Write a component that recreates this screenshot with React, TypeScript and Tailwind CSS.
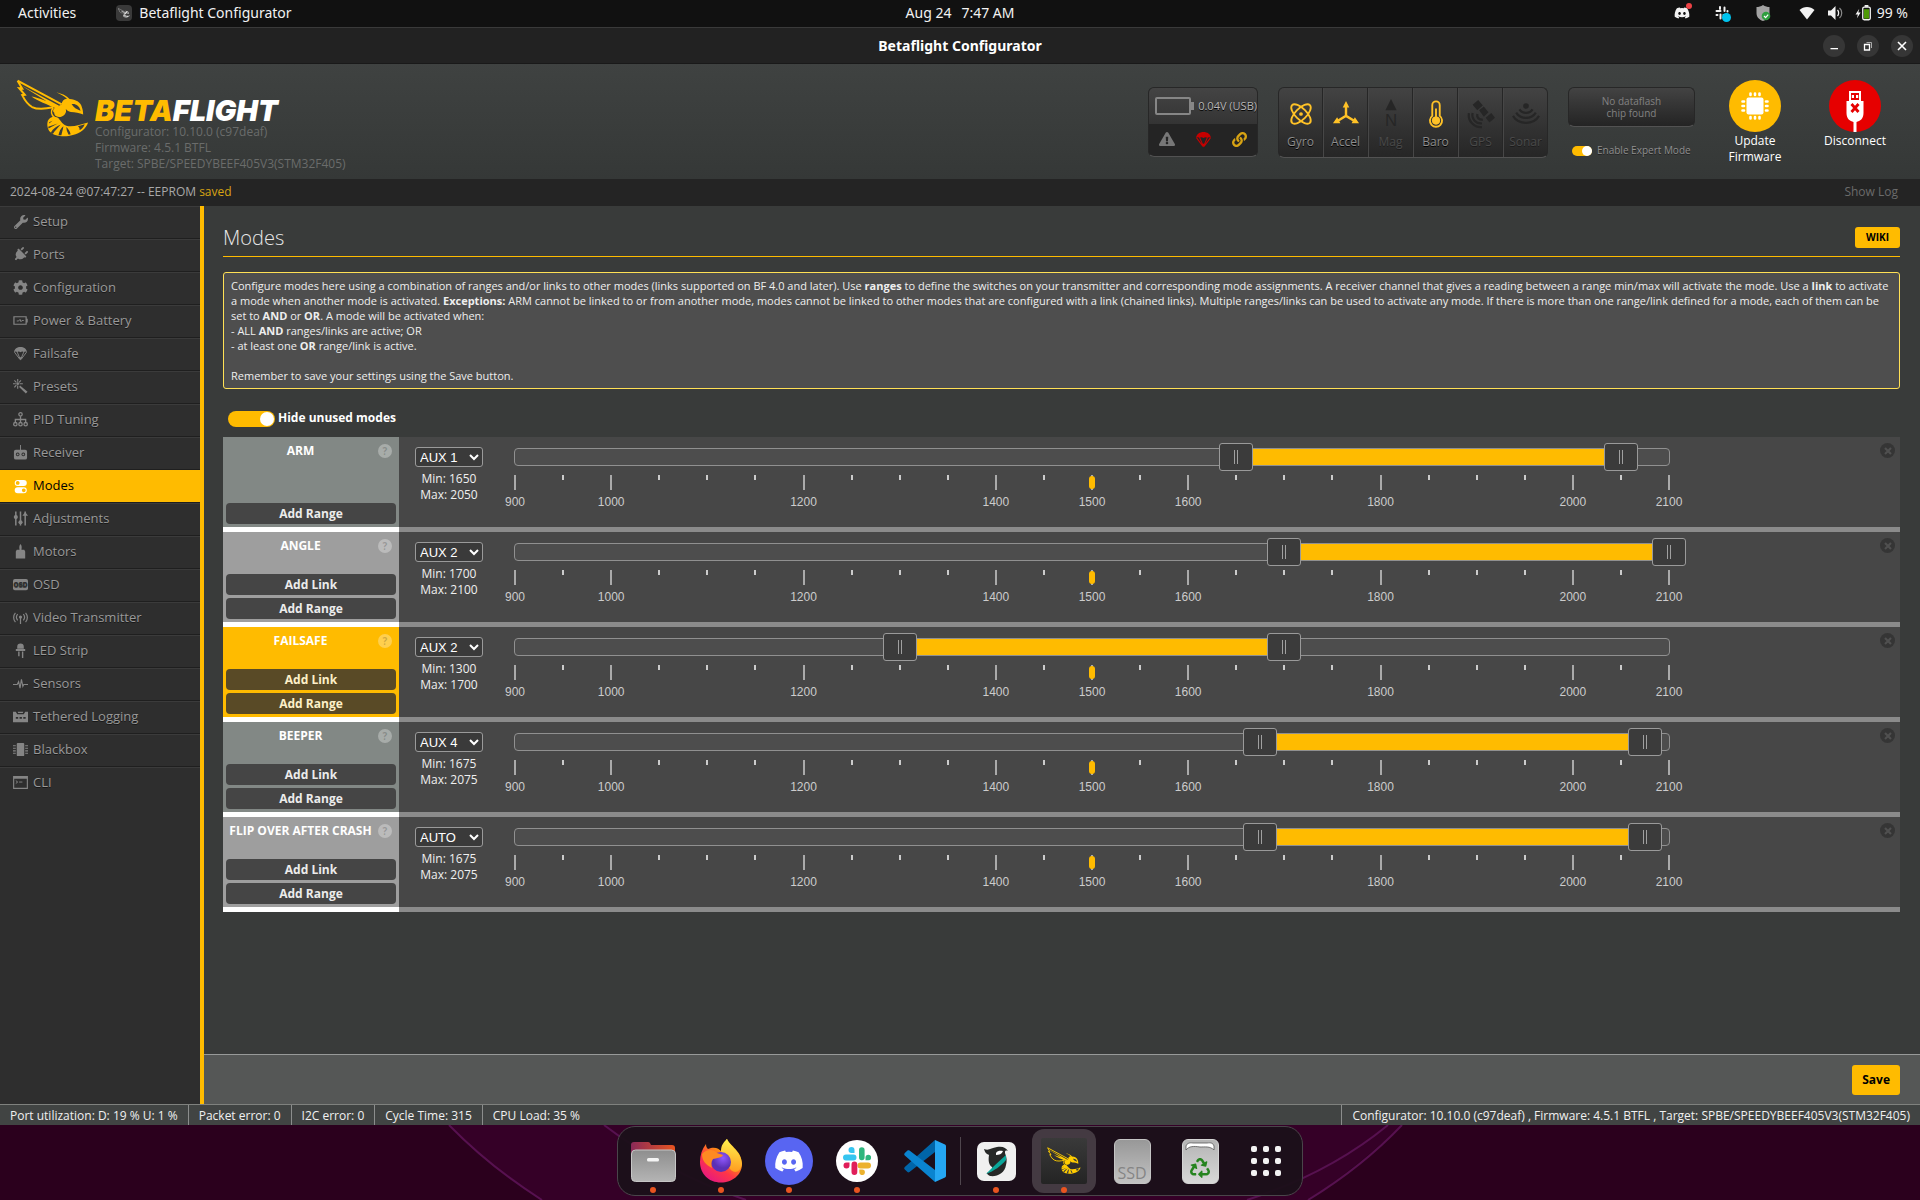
import { useState } from "react";
import type { ReactNode } from "react";
import { FaWrench, FaPlug, FaCog, FaDiscord, FaRecycle, FaLink, FaExclamationTriangle } from "react-icons/fa";

/* ---------- drawings ---------- */

function Bee({ className }: { className?: string }) {
  return (
    <svg viewBox="46 235 220 176" className={className} aria-hidden="true">
      <path
        d="M50 240 L64 264 L55 263 L72 283 L64 284 C72 300 80 312 94 320 C112 329 134 326 158 321 M50 240 L184 312"
        fill="none"
        stroke="currentColor"
        strokeWidth="6"
        strokeLinejoin="miter"
      />
      <path d="M64 256 L176 316 L170 322 L60 254 Z M92 288 C115 292 145 304 172 318 L166 324 C140 312 112 302 92 288 Z" fill="currentColor" />
      <path d="M168 275 C184 279 199 285 208 296 C226 297 242 306 245 320 C248 328 249 335 249 343 C238 337 224 336 212 335 C204 333 199 330 196 325 C200 336 193 347 180 350 C168 352 161 346 161 337 C154 332 160 322 168 320 L184 312 C184 302 190 296 200 295 C191 286 180 281 168 275 Z" fill="currentColor" />
      <path d="M158 322 C150 332 152 344 162 352" fill="none" stroke="currentColor" strokeWidth="5" />
      <path d="M142 362 C148 350 160 347 171 352 C180 358 184 372 198 377 C218 383 240 372 264 367 C258 386 240 400 218 405 C198 411 164 411 149 396 C141 388 138 374 142 362 Z" fill="currentColor" />
      <g className="fill-[#3a3d3c]">
        <path d="M214 311 C226 309 238 316 241 331 C230 327 219 322 214 311 Z" />
        <path d="M143 380 L172 370 L144 385 Z M151 397 C158 386 168 378 181 373 C173 382 163 392 157 402 Z M174 406 C176 394 181 384 189 378 C188 388 184 398 183 406 Z M205 404 C200 396 198 388 198 381 C204 386 209 394 211 403 Z M233 378 L254 372 C250 382 243 388 238 390 C239 385 237 381 233 378 Z M146 366 L156 362 L146 370 Z" />
      </g>
    </svg>
  );
}

const S = ({ children, className = "size-[15px]", box = "0 0 16 16" }: { children: ReactNode; className?: string; box?: string }) => (
  <svg viewBox={box} className={className} fill="currentColor" aria-hidden="true">
    {children}
  </svg>
);

function Parachute({ className }: { className?: string }) {
  return (
    <S className={className}>
      <path d="M1 6.500 C1.500 3 4.500 1 8 1 C11.500 1 14.500 3 15 6.500 C13.900 5.700 12.500 5.700 11.600 6.600 C10.700 5.700 9.200 5.700 8 6.600 C6.800 5.700 5.300 5.700 4.400 6.600 C3.500 5.700 2.100 5.700 1 6.500 Z" />
      <path d="M1.500 6.500 L7.500 14.500 M4.500 6.500 L7.700 14 M14.500 6.500 L8.500 14.500 M11.500 6.500 L8.300 14" fill="none" stroke="currentColor" strokeWidth="1" />
      <path d="M6.500 12 H9.500 L8 15.500 Z" />
    </S>
  );
}

function SlackMark({ className }: { className?: string }) {
  return (
    <svg viewBox="0 0 28 28" className={className} aria-hidden="true">
      <path fill="#36c5f0" d="M8.500 0 a3 3 0 0 1 3 3 V6 H8.500 a3 3 0 0 1 0-6 Z M3 7.500 h7.500 a3 3 0 0 1 0 6 H3 a3 3 0 0 1 0-6 Z" />
      <path fill="#2eb67d" d="M16 3 a2.800 2.800 0 0 1 5.600 0 V10.500 a2.800 2.800 0 0 1-5.600 0 Z M22.500 13.300 V10.300 a2.800 2.800 0 1 1 2.800 3 Z" />
      <path fill="#ecb22e" d="M17.500 15.500 H25 a3 3 0 0 1 0 6 H17.500 a3 3 0 0 1 0-6 Z M16.300 22.500 h3 a2.800 2.800 0 1 1-3 2.800 Z" />
      <path fill="#e01e5a" d="M8.500 17.500 a2.900 2.900 0 0 1 5.800 0 V25 a2.900 2.900 0 0 1-5.800 0 Z M6.500 15.500 v3 a3 3 0 1 1-3-3 Z" />
    </svg>
  );
}

/* ---------- desktop top bar ---------- */

function TopBar() {
  return (
    <header className="grid h-[27px] grid-cols-3 items-center bg-[#111111] pb-px font-['Noto_Sans','Open_Sans',sans-serif] text-sm text-[#f2f2f2]">
      <div className="flex items-center pl-[18px]">
        <button type="button">Activities</button>
        <span className="ml-10 grid size-4 place-items-center rounded-sm bg-[#3a3a3a]">
          <Bee className="w-3 text-[#d8d8d8]" />
        </span>
        <span className="ml-[7px]">Betaflight Configurator</span>
      </div>
      <div className="flex justify-center gap-2.5">
        <span>Aug 24</span>
        <span>7:47 AM</span>
      </div>
      <div className="flex items-center justify-end pr-3">
        <span className="relative">
          <FaDiscord className="size-4" />
          <i className="absolute -top-0.5 -right-0.5 size-1.5 rounded-full bg-[#ed4245]" />
        </span>
        <span className="relative ml-[25px]">
          <svg viewBox="0 0 28 28" className="size-[14px]" fill="none" stroke="currentColor" strokeWidth="4" strokeLinecap="round">
            <path d="M10 2 V6 M3 10 H11 M19 3 V10 M25 10 V11 M17 18 H25 M11 17 V25 M3 18 H5" />
          </svg>
          <i className="absolute -right-0.5 -bottom-0.5 size-[9px] rounded-full bg-[#00c3ee]" />
        </span>
        <span className="relative ml-[26px]">
          <S className="size-4">
            <path d="M8 0 C10 1.600 12.500 2 14.500 2 V8 C14.500 12 12 14.500 8 16 C4 14.500 1.500 12 1.500 8 V2 C3.500 2 6 1.600 8 0 Z" className="fill-[#a3a3a3]" />
            <circle cx="11" cy="11" r="4.300" className="fill-[#2f9e3f]" />
            <path d="M9 11 L10.600 12.600 L13.200 9.600" fill="none" stroke="#fff" strokeWidth="1.200" />
          </S>
        </span>
        <S className="ml-7 size-4">
          <path d="M0.500 5 C4.500 1 11.500 1 15.500 5 L8 14.500 Z" />
        </S>
        <S className="ml-3 size-4">
          <path d="M1 5.500 H4 L8.500 1 V15 L4 10.500 H1 Z" />
          <path d="M10.500 5 C12 6.500 12 9.500 10.500 11" fill="none" stroke="currentColor" strokeWidth="1.300" />
          <path d="M12.500 3 C15.500 5.500 15.500 10.500 12.500 13" fill="none" stroke="#8a8a8a" strokeWidth="1.200" />
        </S>
        <S className="ml-3 h-4 w-[17px]" box="0 0 17 17">
          <path d="M4 4 L0 10 H2.500 L1.500 14 L5.500 8 H3 Z" />
          <rect x="7.700" y="2.200" width="8" height="13.500" rx="1.500" fill="none" stroke="currentColor" strokeWidth="1.400" />
          <rect x="9.700" y="0" width="4" height="2" />
          <rect x="9" y="4.500" width="5.400" height="10" className="fill-[#4e9a06]" />
        </S>
        <span className="ml-[5px]">99 %</span>
      </div>
    </header>
  );
}

function TitleBar() {
  const button = "grid size-[22px] place-items-center rounded-full bg-[#363636]";
  return (
    <div className="grid h-[37px] grid-cols-[1fr_auto_1fr] items-center border-t border-b border-t-[#3a3a3a] border-b-[#191919] bg-[#222222] px-[7px] font-['Noto_Sans','Open_Sans',sans-serif] text-sm text-white">
      <h1 className="col-start-2 font-bold">Betaflight Configurator</h1>
      <div className="flex justify-end gap-3">
        <button type="button" aria-label="Minimize" className={button}>
          <S className="size-3" box="0 0 12 12"><path d="M2.500 8 H10 V9.300 H2.500 Z" /></S>
        </button>
        <button type="button" aria-label="Restore" className={button}>
          <S className="size-3" box="0 0 12 12">
            <path d="M2.500 4.500 H7.500 V10 H2.500 Z" fill="none" stroke="currentColor" strokeWidth="1.300" />
            <path d="M4.500 2.500 H9.500 V8" fill="none" stroke="#aaa" strokeWidth="1" />
          </S>
        </button>
        <button type="button" aria-label="Close" className={button}>
          <S className="size-3" box="0 0 12 12"><path d="M2 2 L10 10 M10 2 L2 10" stroke="currentColor" strokeWidth="1.600" /></S>
        </button>
      </div>
    </div>
  );
}

/* ---------- application header ---------- */

const sensors: { label: string; on: boolean; icon: ReactNode }[] = [
  {
    label: "Gyro",
    on: true,
    icon: (
      <g fill="none" stroke="currentColor" strokeWidth="2">
        <ellipse cx="15" cy="15" rx="13.500" ry="6" transform="rotate(45 15 15)" />
        <ellipse cx="15" cy="15" rx="13.500" ry="6" transform="rotate(-45 15 15)" />
        <circle cx="15" cy="15" r="2" fill="currentColor" stroke="none" />
      </g>
    ),
  },
  {
    label: "Accel",
    on: true,
    icon: (
      <g>
        <path d="M15 5 V17 L5 23 M15 17 L25 23" fill="none" stroke="currentColor" strokeWidth="2.600" />
        <path d="M15 1 L18.500 8 H11.500 Z M1 25 L5.500 18.500 L9 25 Z M29 25 L24.500 18.500 L21 25 Z" />
      </g>
    ),
  },
  {
    label: "Mag",
    on: false,
    icon: (
      <g>
        <path fillRule="evenodd" d="M15 -1 L21 11 H9 Z" />
        <text x="15" y="28" textAnchor="middle" className="font-['Liberation_Sans',sans-serif] text-[18px]">N</text>
      </g>
    ),
  },
  {
    label: "Baro",
    on: true,
    icon: (
      <g>
        <path d="M11 17 V5.500 a4 4 0 0 1 8 0 V17 a6.500 6.500 0 1 1-8 0 Z" fill="none" stroke="currentColor" strokeWidth="2" />
        <circle cx="15" cy="22" r="4.400" />
        <path d="M14 9 H16 V20 H14 Z" />
      </g>
    ),
  },
  {
    label: "GPS",
    on: false,
    icon: (
      <g>
        <path d="M6 5 L12 0 L17 6 L11 11 Z M20 19 L26 14 L30 19 L24 24 Z M13 11 L18 7 L23 13 L18 18 Z" />
        <path d="M11 15 a5 5 0 0 0 6 6 M6 14 a9 9 0 0 0 10 11 M2 14 a13 13 0 0 0 14 15" fill="none" stroke="currentColor" strokeWidth="2.400" />
      </g>
    ),
  },
  {
    label: "Sonar",
    on: false,
    icon: (
      <g>
        <circle cx="15" cy="6.500" r="3" />
        <path d="M8 10 C11 15 19 15 22 10 M4.500 13.500 C9 21 21 21 25.500 13.500 M1 17 C7 27 23 27 29 17" fill="none" stroke="currentColor" strokeWidth="2.300" />
      </g>
    ),
  },
];

function AppHeader() {
  const [expert, setExpert] = useState(true);
  return (
    <div className="flex h-[115px] justify-between bg-linear-to-b from-[#3f4241] to-[#353837]">
      <div className="flex pt-[15px] pl-4">
        <Bee className="h-[58px] w-[73px] text-[#ffbb00]" />
        <div className="pt-[17px] pl-1.5">
          <div className="mb-px h-[27px] font-['Inter','Liberation_Sans',sans-serif] text-[29px] leading-[29px] font-black italic text-white">
            <span className="text-[#ffbb00]">BETA</span>FLIGHT
          </div>
          <div className="text-xs leading-4 text-[#6a6c6b]">
            <p>Configurator: 10.10.0 (c97deaf)</p>
            <p>Firmware: 4.5.1 BTFL</p>
            <p>Target: SPBE/SPEEDYBEEF405V3(STM32F405)</p>
          </div>
        </div>
      </div>
      <div className="flex pr-8">
        <div className="mt-[23px] h-[70px] w-[110px] overflow-hidden rounded-md border border-[#272727] border-b-[#525252] bg-[#242424]">
          <div className="flex h-9 items-center bg-linear-to-b from-[#444444] to-[#343434] pl-1.5">
            <span className="h-[18px] w-[37px] rounded-xs border-2 border-[#868686]" />
            <span className="h-2 w-[3px] bg-[#868686]" />
            <span className="ml-1 text-[11px] whitespace-nowrap text-[#b8b8b8] [text-shadow:0_1px_#000]">0.04V (USB)</span>
          </div>
          <div className="flex h-[30px] items-center justify-between pr-2.5 pl-2.5">
            <FaExclamationTriangle className="size-4 text-[#777777]" aria-label="Warning" />
            <Parachute className="size-[17px] text-[#c70000]" />
            <FaLink className="size-[15px] text-[#d8a313]" aria-label="Link" />
          </div>
        </div>
        <ul className="mt-[23px] ml-5 flex h-[71px] w-[270px] overflow-hidden rounded-md border border-[#272727] border-b-[#525252] bg-linear-to-b from-[#434343] to-[#262626]">
          {sensors.map((s) => (
            <li key={s.label} className="flex flex-1 flex-col items-center border-r border-l border-r-[#262626] border-l-[#474747] pt-[12px] first:border-l-0 last:border-r-0">
              <svg viewBox="0 0 30 30" className={s.on ? "size-7 overflow-visible text-[#ffc227]" : "size-7 overflow-visible text-[#262626]"} fill="currentColor" aria-hidden="true">
                {s.icon}
              </svg>
              <span className={s.on ? "mt-1 text-xs leading-5 text-[#8d8d8d] [text-shadow:0_1px_#000]" : "mt-1 text-xs leading-5 text-[#4a4a4a] [text-shadow:0_1px_#1c1c1c]"}>
                {s.label}
              </span>
            </li>
          ))}
        </ul>
        <div className="mt-[23px] ml-5 w-[127px]">
          <div className="grid h-10 place-items-center rounded-md border border-[#272727] border-b-[#525252] bg-linear-to-b from-[#434343] to-[#242424] text-center text-[10px] leading-3 text-[#828282]">
            <span className="w-16">No dataflash chip found</span>
          </div>
          <label className="mt-4 flex items-center gap-[5px] pl-1 text-[10px] whitespace-nowrap text-[#8f8f8f] [text-shadow:0_1px_#222]">
            <input
              type="checkbox"
              role="switch"
              checked={expert}
              onChange={(e) => setExpert(e.target.checked)}
              className="relative h-[10px] w-5 shrink-0 appearance-none rounded-full bg-[#777] after:absolute after:top-0 after:left-0 after:size-[10px] after:rounded-full after:bg-white checked:bg-[#ffbb00] checked:after:right-0 checked:after:left-auto"
            />
            Enable Expert Mode
          </label>
        </div>
        <button type="button" className="mt-4 ml-[27px] flex w-[66px] flex-col items-center text-xs leading-4 text-white">
          <span className="mb-px grid size-[52px] shrink-0 place-items-center rounded-full bg-[#ffbb00]">
            <S className="size-7" box="0 0 28 28">
              <rect x="5.500" y="5.500" width="17" height="17" rx="2" />
              <path d="M9.500 1.500 V3 M14 1.500 V3 M18.500 1.500 V3 M9.500 25 V26.500 M14 25 V26.500 M18.500 25 V26.500 M1.500 9.500 H3 M1.500 14 H3 M1.500 18.500 H3 M25 9.500 H26.500 M25 14 H26.500 M25 18.500 H26.500" stroke="currentColor" strokeWidth="2.600" strokeLinecap="round" />
            </S>
          </span>
          Update Firmware
        </button>
        <button type="button" className="mt-4 ml-[34px] flex w-[66px] flex-col items-center text-xs leading-4 text-white">
          <span className="mb-px grid size-[52px] shrink-0 place-items-end justify-center rounded-full bg-[#e60000]">
            <svg viewBox="0 0 20 42" className="h-[42px] w-5" aria-hidden="true">
              <path d="M5 2 H15 V11 H5 Z" fill="none" stroke="#fff" strokeWidth="2" />
              <path d="M6.800 5 H9 V8 H6.800 Z M11 5 H13.200 V8 H11 Z" fill="#fff" />
              <path d="M1.500 11 H18.500 V23 C18.500 29 15 31 11.500 32 V42 H8.500 V32 C5 31 1.500 29 1.500 23 Z" fill="#fff" />
              <path d="M6.500 14 L13.500 22 M13.500 14 L6.500 22" stroke="#e60000" strokeWidth="2.800" />
            </svg>
          </span>
          Disconnect
        </button>
      </div>
    </div>
  );
}

/* ---------- sidebar ---------- */

const tabs: { label: string; icon: ReactNode }[] = [
  { label: "Setup", icon: <FaWrench className="size-[14px]" /> },
  { label: "Ports", icon: <FaPlug className="size-[15px] rotate-45" /> },
  { label: "Configuration", icon: <FaCog className="size-[15px]" /> },
  {
    label: "Power & Battery",
    icon: (
      <S>
        <path d="M1 4 H14 V12 H1 Z" fill="none" stroke="currentColor" strokeWidth="1.300" />
        <path d="M14 6 H15.700 V10 H14 Z" />
        <path d="M4 8.500 H6 L7.500 6.800 L8.500 9.300 L9.500 8 H11.500" fill="none" stroke="currentColor" strokeWidth="1" />
      </S>
    ),
  },
  { label: "Failsafe", icon: <Parachute className="size-[15px]" /> },
  {
    label: "Presets",
    icon: (
      <S>
        <path d="M7.500 7 L15.500 13.500 L13.700 15.500 L6.500 8.500 Z" />
        <path d="M5 0 V3 M5 7 V10.500 M0 5 H3 M7 5 H10.500 M1.500 1.500 L3.500 3.500 M6.500 3.500 L8.500 1.500 M1.500 9 L3.500 6.500" fill="none" stroke="currentColor" strokeWidth="1.200" />
        <circle cx="5" cy="5" r="1.500" />
      </S>
    ),
  },
  {
    label: "PID Tuning",
    icon: (
      <S>
        <g fill="none" stroke="currentColor" strokeWidth="1.400">
          <circle cx="8" cy="2.500" r="1.800" />
          <circle cx="2.500" cy="13" r="1.800" />
          <circle cx="8" cy="13" r="1.800" />
          <circle cx="13.500" cy="13" r="1.800" />
          <path d="M8 4.500 V11 M2.500 11 V8 H13.500 V11" />
        </g>
      </S>
    ),
  },
  {
    label: "Receiver",
    icon: (
      <S>
        <path fillRule="evenodd" d="M7.500 0 H8.500 V5 H13 a2 2 0 0 1 2 2 V13.500 a2 2 0 0 1-2 2 H3 a2 2 0 0 1-2-2 V7 a2 2 0 0 1 2-2 H7.500 Z M5 8 a2 2 0 1 0 0.010 0 Z M11 8 a2 2 0 1 0 0.010 0 Z" />
        <circle cx="5" cy="10" r="1" />
        <circle cx="11" cy="10" r="1" />
      </S>
    ),
  },
  {
    label: "Modes",
    icon: (
      <S className="size-[15px] text-white">
        <path fillRule="evenodd" d="M5 1 H11.500 a3.200 3.200 0 0 1 0 6.400 H5 a3.200 3.200 0 0 1 0-6.400 Z M5 2.200 a2 2 0 1 0 0.010 0 Z M5 8.800 H11.500 a3.200 3.200 0 0 1 0 6.400 H5 a3.200 3.200 0 0 1 0-6.400 Z M11.500 10 a2 2 0 1 0 0.010 0 Z" />
      </S>
    ),
  },
  {
    label: "Adjustments",
    icon: (
      <S>
        <path d="M2.200 0.500 H3.800 V15.500 H2.200 Z M7.200 0.500 H8.800 V15.500 H7.200 Z M12.200 0.500 H13.800 V15.500 H12.200 Z" />
        <circle cx="3" cy="6.500" r="2.200" />
        <circle cx="8" cy="12" r="2.200" />
        <path d="M13 1 L16 5 H10 Z" />
      </S>
    ),
  },
  {
    label: "Motors",
    icon: (
      <S>
        <path d="M8 0 C9.500 2 9.500 3.500 9 6 H12 L13 8 V15.500 H3 V8 L4 6 H7 C6.500 3.500 6.500 2 8 0 Z" />
      </S>
    ),
  },
  {
    label: "OSD",
    icon: (
      <S>
        <rect x="0" y="2" width="16" height="12" rx="2" />
        <text x="8" y="10.500" textAnchor="middle" className="fill-[#2e2e2e] font-['Inter',sans-serif] text-[7px] font-black">OSD</text>
      </S>
    ),
  },
  {
    label: "Video Transmitter",
    icon: (
      <S>
        <path d="M8 7 V15 M5 11 a5 5 0 0 1 0-6.500 M11 11 a5 5 0 0 0 0-6.500 M2.600 13 a7.500 7.500 0 0 1 0-10 M13.400 13 a7.500 7.500 0 0 0 0-10" fill="none" stroke="currentColor" strokeWidth="1.300" />
        <circle cx="8" cy="7.500" r="1.700" />
      </S>
    ),
  },
  {
    label: "LED Strip",
    icon: (
      <S>
        <path d="M4.500 6 V4 a3.500 3.500 0 0 1 7 0 V6 Z M3 6.500 H13 V8.500 H3 Z M5.500 9 H7 V14 H5.500 Z M9.500 9 H11 V16 H9.500 Z" />
      </S>
    ),
  },
  {
    label: "Sensors",
    icon: (
      <S>
        <path d="M0 9 H4.500 L6 6 L7.500 13 L9 3.500 L10.500 11 L11.500 9 H16" fill="none" stroke="currentColor" strokeWidth="1.200" />
      </S>
    ),
  },
  {
    label: "Tethered Logging",
    icon: (
      <S>
        <path fillRule="evenodd" d="M0 3 H3 L4.500 5.500 H11.500 L13 3 H16 V14 H0 Z M5 3 H11 L10.500 4.300 H5.500 Z M3 8.500 V10.500 H5.500 V8.500 Z M7 8.500 V10.500 H9.500 V8.500 Z M11 8.500 V10.500 H13.500 V8.500 Z" />
      </S>
    ),
  },
  {
    label: "Blackbox",
    icon: (
      <S>
        <rect x="4" y="1" width="8" height="14" rx="1" />
        <path d="M0 4 H3 M0 6.700 H3 M0 9.400 H3 M0 12 H3 M13 4 H16 M13 6.700 H16 M13 9.400 H16 M13 12 H16" stroke="currentColor" strokeWidth="1.200" />
      </S>
    ),
  },
  {
    label: "CLI",
    icon: (
      <S>
        <path d="M0.700 1.700 H15.300 V14.300 H0.700 Z" fill="none" stroke="currentColor" strokeWidth="1.200" />
        <path d="M0.700 1.500 H15.300 V4 H0.700 Z" />
        <path d="M3 6 L5 7.500 L3 9 M6.500 7.500 H10" fill="none" stroke="currentColor" strokeWidth="1" />
      </S>
    ),
  },
];

function Sidebar() {
  return (
    <nav className="w-[204px] shrink-0 border-r-4 border-[#ffbb00] bg-[#2e2e2e] text-[13px]">
      <ul>
        {tabs.map((t) => {
          const active = t.label === "Modes";
          return (
            <li key={t.label} className="border-t border-b border-t-[#3b3b3b] border-b-[#1f1f1f] last:border-b-0">
              <a
                href={"#" + t.label.toLowerCase().replace(/\W+/g, "-")}
                aria-current={active ? "page" : undefined}
                className={
                  active
                    ? "-mt-px flex h-8 items-center gap-[5px] bg-[#ffbb00] pl-[13px] text-black"
                    : "flex h-[31px] items-center gap-[5px] pb-0.5 pl-[13px] text-[#999999] [text-shadow:0_1px_rgba(0,0,0,0.5)]"
                }
              >
                <span className={active ? "grid w-[15px] place-items-center" : "grid w-[15px] place-items-center text-[#858585]"}>{t.icon}</span>
                {t.label}
              </a>
            </li>
          );
        })}
      </ul>
    </nav>
  );
}

/* ---------- modes ---------- */

const LOW = 900;
const HIGH = 2100;
const labelled = [900, 1000, 1200, 1400, 1500, 1600, 1800, 2000, 2100];
const pips = Array.from({ length: 25 }, (_, i) => LOW + i * 50);
const percent = (v: number) => ((v - LOW) / (HIGH - LOW)) * 100 + "%";

const thumb =
  "pointer-events-none absolute -inset-x-[17px] -top-[6px] h-7 appearance-none bg-transparent " +
  "[&::-webkit-slider-thumb]:pointer-events-auto [&::-webkit-slider-thumb]:h-7 [&::-webkit-slider-thumb]:w-[34px] [&::-webkit-slider-thumb]:appearance-none " +
  "[&::-webkit-slider-thumb]:rounded-[3px] [&::-webkit-slider-thumb]:border [&::-webkit-slider-thumb]:border-[#9a9a9a] [&::-webkit-slider-thumb]:bg-[#3b3b3b] " +
  "[&::-webkit-slider-thumb]:bg-[linear-gradient(90deg,transparent_14px,#a0a0a0_14px_15px,transparent_15px_17px,#a0a0a0_17px_18px,transparent_18px)] " +
  "[&::-webkit-slider-thumb]:bg-size-[32px_14px] [&::-webkit-slider-thumb]:bg-center [&::-webkit-slider-thumb]:bg-no-repeat";

type Mode = { name: string; channel: string; min: number; max: number; box: string; button: string; link: boolean };

const grayButton = "h-[21px] w-full rounded-sm bg-[#454545] text-xs leading-[21px] font-bold text-[#ececec]";
const activeButton = "h-[21px] w-full rounded-sm bg-[#594a26] text-xs leading-[21px] font-bold text-[#fdf0c8]";

const modes: Mode[] = [
  { name: "ARM", channel: "AUX 1", min: 1650, max: 2050, box: "bg-[#828885]", button: grayButton, link: false },
  { name: "ANGLE", channel: "AUX 2", min: 1700, max: 2100, box: "bg-[#9e9e9e]", button: grayButton, link: true },
  { name: "FAILSAFE", channel: "AUX 2", min: 1300, max: 1700, box: "bg-[#ffbb00]", button: activeButton, link: true },
  { name: "BEEPER", channel: "AUX 4", min: 1675, max: 2075, box: "bg-[#828885]", button: grayButton, link: true },
  { name: "FLIP OVER AFTER CRASH", channel: "AUTO", min: 1675, max: 2075, box: "bg-[#9e9e9e]", button: grayButton, link: true },
];

function ModeRow({ mode }: { mode: Mode }) {
  const [min, setMin] = useState(mode.min);
  const [max, setMax] = useState(mode.max);
  return (
    <li className="flex h-[95px]">
      <div className={"flex w-44 shrink-0 flex-col gap-[3px] border-b-[5px] border-b-white px-[3px] pb-[3px] " + mode.box}>
        <div className="mb-auto flex items-center pt-1.5">
          <h3 className="flex-1 text-center text-xs leading-4 font-bold whitespace-nowrap text-white">{mode.name}</h3>
          <button type="button" aria-label={"About " + mode.name} className="mr-1 ml-[3px] size-[14px] shrink-0 rounded-full bg-white/30 text-[10px] leading-[14px] font-bold text-black/20">
            ?
          </button>
        </div>
        {mode.link && <button type="button" className={mode.button}>Add Link</button>}
        <button type="button" className={mode.button}>Add Range</button>
      </div>
      <div className="flex flex-1 border-b-[5px] border-[#8b8b8b] bg-[#474747]">
        <div className="ml-4 w-[68px] shrink-0 pt-[10px] text-center text-xs leading-4 text-[#f0f0f0]">
          <select
            aria-label={mode.name + " channel"}
            defaultValue={mode.channel}
            className="mb-1 block h-5 w-full rounded-[3px] border border-[#9a9a9a] bg-[#3a3a3a] font-['Liberation_Sans',sans-serif] text-[13px] text-white"
          >
            {["AUTO", "AUX 1", "AUX 2", "AUX 3", "AUX 4"].map((c) => (
              <option key={c}>{c}</option>
            ))}
          </select>
          <p>Min: {min}</p>
          <p>Max: {max}</p>
        </div>
        <div className="mr-[211px] ml-8 flex-1 pt-[11px]">
          <div className="relative -mx-px h-[18px] rounded-[4px] border border-[#909090] bg-[#4d4d4d]">
            <div className="absolute inset-y-0 bg-[#ffbb00]" style={{ left: percent(min), right: 100 - parseFloat(percent(max)) + "%" }} />
            <input type="range" aria-label={mode.name + " minimum"} min={LOW} max={HIGH} step={25} value={min} onChange={(e) => setMin(Math.min(+e.target.value, max))} className={thumb} />
            <input type="range" aria-label={mode.name + " maximum"} min={LOW} max={HIGH} step={25} value={max} onChange={(e) => setMax(Math.max(+e.target.value, min))} className={thumb} />
          </div>
          <div className="relative mt-[9px] h-9 font-['Liberation_Sans',sans-serif] text-xs leading-4 text-[#cccccc]">
            {pips.map((v) => (
              <div key={v} className="absolute top-0 flex w-10 -translate-x-1/2 flex-col items-center" style={{ left: percent(v) }}>
                {labelled.includes(v) ? (
                  <>
                    <span className="h-[15px] w-0.5 bg-[#aaaaaa]" />
                    <span className="mt-1">{v}</span>
                  </>
                ) : (
                  <span className="h-[5px] w-0.5 bg-[#cccccc]" />
                )}
              </div>
            ))}
            <span className="absolute top-px h-[13px] w-1.5 -translate-x-1/2 rounded-full bg-[#ffbb00]" style={{ left: percent(1500) }} />
          </div>
        </div>
        <button type="button" aria-label="Remove range" className="mt-1.5 mr-[5px] grid size-[15px] place-items-center rounded-full bg-[#353535] text-[#505050]">
          <S className="size-2" box="0 0 8 8"><path d="M1 1 L7 7 M7 1 L1 7" stroke="currentColor" strokeWidth="2.200" /></S>
        </button>
      </div>
    </li>
  );
}

function ModesTab() {
  const [hide, setHide] = useState(true);
  return (
    <main className="flex min-w-0 flex-1 flex-col">
      <div className="flex-1 px-5 pt-5 pl-[19px]">
        <div className="flex h-[31px] items-start justify-between border-b border-[#ffbb00]">
          <h2 className="text-xl leading-6 font-light text-[#e8e8e8]">Modes</h2>
          <a href="#wiki" className="mt-px rounded-[3px] bg-[#ffbb00] px-[11px] text-[10px] leading-[21px] font-bold text-black">WIKI</a>
        </div>
        <div className="mt-[15px] rounded-[3px] border border-[#ffe055] bg-[#4e4e4e] px-[7px] py-[5px] text-[11px] leading-[15px] text-[#eeeeee]">
          <p>
            Configure modes here using a combination of ranges and/or links to other modes (links supported on BF 4.0 and later). Use <b>ranges</b> to define the switches on your transmitter and corresponding mode assignments. A receiver channel that gives a reading between a range min/max will activate the mode. Use a <b>link</b> to activate a mode when another mode is activated. <b>Exceptions:</b> ARM cannot be linked to or from another mode, modes cannot be linked to other modes that are configured with a link (chained links). Multiple ranges/links can be used to activate any mode. If there is more than one range/link defined for a mode, each of them can be set to <b>AND</b> or <b>OR</b>. A mode will be activated when:
          </p>
          <p>- ALL <b>AND</b> ranges/links are active; OR</p>
          <p>- at least one <b>OR</b> range/link is active.</p>
          <p className="mt-[15px]">Remember to save your settings using the Save button.</p>
        </div>
        <label className="mt-[18px] mb-2 ml-[5px] flex h-[22px] w-fit items-center gap-[3px] text-xs font-bold text-white">
          <input
            type="checkbox"
            role="switch"
            checked={hide}
            onChange={(e) => setHide(e.target.checked)}
            className="relative mt-0.5 h-4 w-[47px] appearance-none rounded-full bg-[#777] after:absolute after:top-px after:left-px after:size-[14px] after:rounded-full after:bg-white checked:bg-[#ffbb00] checked:after:right-px checked:after:left-auto"
          />
          Hide unused modes
        </label>
        <ul>
          {modes.map((m) => (
            <ModeRow key={m.name} mode={m} />
          ))}
        </ul>
      </div>
      <div className="flex h-[50px] items-center justify-end border-t border-[#989a99] bg-[#555756] pr-5">
        <button type="button" className="h-[30px] rounded-[3px] bg-[#ffbb00] px-2.5 text-xs font-bold text-black">Save</button>
      </div>
    </main>
  );
}

function StatusBar() {
  return (
    <footer className="flex h-[21px] border-t border-[#7f817e] bg-[#414443] text-xs leading-[22px] whitespace-nowrap text-[#f0f0f0]">
      {["Port utilization: D: 19 % U: 1 %", "Packet error: 0", "I2C error: 0", "Cycle Time: 315"].map((t) => (
        <span key={t} className="border-r border-[#8b8d8c] px-2.5">{t}</span>
      ))}
      <span className="px-2.5">CPU Load: 35 %</span>
      <span className="ml-auto border-l border-[#8b8d8c] px-2.5">
        Configurator: 10.10.0 (c97deaf) , Firmware: 4.5.1 BTFL , Target: SPBE/SPEEDYBEEF405V3(STM32F405)
      </span>
    </footer>
  );
}

/* ---------- dock ---------- */

const dockLeft: { name: string; art: ReactNode }[] = [
  {
    name: "Files",
    art: (
      <svg viewBox="0 0 48 48" className="size-12">
        <defs>
          <linearGradient id="folder" x1="0" x2="1"><stop offset="0" stopColor="#8a2a58" /><stop offset="1" stopColor="#e95420" /></linearGradient>
          <linearGradient id="drawer" x1="0" x2="0" y1="0" y2="1"><stop offset="0" stopColor="#8e8e8e" /><stop offset="1" stopColor="#b4b4b4" /></linearGradient>
        </defs>
        <path d="M2 8 a3 3 0 0 1 3-3 H19 a3 3 0 0 1 2 1 L22 8 H43 a3 3 0 0 1 3 3 V20 H2 Z" fill="url(#folder)" />
        <rect x="2.500" y="13" width="44" height="31.500" rx="4" fill="url(#drawer)" stroke="#c6c6c6" />
        <rect x="18" y="21" width="12" height="3.500" rx="1.500" fill="#f4f4f4" />
      </svg>
    ),
  },
  {
    name: "Firefox",
    art: (
      <svg viewBox="0 0 48 48" className="size-12">
        <defs>
          <linearGradient id="fox" x1="0.900" x2="0.200" y1="0" y2="1"><stop offset="0" stopColor="#fff44f" /><stop offset="0.350" stopColor="#ff980e" /><stop offset="0.650" stopColor="#ff3647" /><stop offset="1" stopColor="#e31587" /></linearGradient>
          <linearGradient id="flame" x1="0.600" x2="0.500" y1="0" y2="1"><stop offset="0" stopColor="#fff44f" /><stop offset="1" stopColor="#ff9a1f" /></linearGradient>
          <radialGradient id="globe" cx="0.600" cy="0.300"><stop offset="0" stopColor="#9059ff" /><stop offset="1" stopColor="#5b30b5" /></radialGradient>
        </defs>
        <path d="M24 45.500 C12 45.500 3 37 3 25 C3 18 5 12 9 7 C9 10 10 11 11 12 C18 9 22 12 24 14 C30 8 27 4 30 2 C33 9 45 14 45 27 C45 38 35 45.500 24 45.500 Z" fill="url(#fox)" />
        <path d="M24 14 C24 8 27 5 30 2 C32 9 44 14 45 27 C43 38 34 36 32 30 Z" fill="url(#flame)" />
        <circle cx="24" cy="25" r="10" fill="url(#globe)" />
        <path d="M5 17 C9 12 17 12 20 16 L26 18 C25 21 19 21 16 22 C14 25 14 28 15 31 C9 28 5 24 5 17 Z" fill="#ff8a22" />
      </svg>
    ),
  },
  {
    name: "Discord",
    art: <span className="grid size-12 place-items-center rounded-full bg-[#5865f2]"><FaDiscord className="size-[30px] text-white" /></span>,
  },
  {
    name: "Slack",
    art: <span className="grid size-[42px] place-items-center rounded-full bg-white"><SlackMark className="size-7" /></span>,
  },
  {
    name: "Visual Studio Code",
    art: (
      <svg viewBox="0 0 42 42" className="size-[42px]">
        <path fillRule="evenodd" d="M31 0 V12 L5.500 32 C4.500 32.500 4 32.500 3.500 32 L0.800 29.500 C0 28.500 0 28 0.800 27 Z" fill="#0065a9" />
        <path d="M0.800 13 L3.500 10.500 C4 10 4.500 10 5.500 10.500 L31 30 V42 L0.800 15.500 C0 14.500 0 14 0.800 13 Z" fill="#0a84d0" />
        <path d="M31 0 L41 4.500 C42 5 42 6 42 7 V35 C42 36 42 37 41 37.500 L31 42 V0 Z" fill="#25a7f3" />
      </svg>
    ),
  },
];

const dockRight: { name: string; art: ReactNode; running?: boolean }[] = [
  {
    name: "OrcaSlicer",
    running: true,
    art: (
      <svg viewBox="0 0 39 39" className="size-[39px]">
        <rect width="39" height="39" rx="7" fill="#f0f0f0" />
        <path d="M7 7 C12 9 14 6 20 5 C26 4 29 6 31 9 C28 8 28 9 28 11 C30 16 30 19 29 23 C28 31 20 35 13 34 C11 33 10 32 10 31 C14 29 16 27 15 25 C12 23 11 19 12 13 C10 12 8 11 7 7 Z" fill="#262827" />
        <path d="M19 11 C21 8 24 9 26 9 C25 12 22 13 19 13 Z" fill="#fff" />
        <path d="M9 32 C15 26 22 19 29 13 V18 C24 24 17 29 9 32 Z" fill="#0aa79a" />
      </svg>
    ),
  },
  {
    name: "Betaflight Configurator",
    running: true,
    art: <span className="grid size-[46px] place-items-center rounded-xs bg-linear-to-b from-[#3a3a3a] to-[#242424]"><Bee className="w-[34px] text-[#ffcc00]" /></span>,
  },
  {
    name: "SSD",
    art: (
      <span className="flex h-[45px] w-[37px] items-end justify-center rounded-md border border-[#c4c4c4] bg-linear-to-b from-[#989898] to-[#c2c2c2] font-['Open_Sans',sans-serif] text-base leading-5 text-[#858585]">
        SSD
      </span>
    ),
  },
  {
    name: "Trash",
    art: (
      <span className="flex h-[45px] w-[37px] flex-col items-center rounded-md border border-[#d4d4d4] bg-linear-to-b from-[#b4b4b4] to-[#d8d8d8]">
        <svg viewBox="0 0 30 8" className="mt-0.5 h-2 w-[30px]"><path d="M1 8 V4 C2 1 5 0.500 8 1 H22 C26 0.500 28 1 29 4 V8 C25 4 20 5 15 5 C9 4 4 4 1 8 Z" fill="#fff" stroke="#555" strokeWidth="0.800" /></svg>
        <FaRecycle className="mt-2 size-5 text-[#26841f]" />
      </span>
    ),
  },
];

function Dock() {
  const dot = <i className="absolute bottom-0 left-1/2 size-1.5 -translate-x-1/2 rounded-full bg-[#e95420]" />;
  return (
    <div className="relative flex h-[75px] items-start justify-center overflow-hidden bg-[#2b001d] pt-px">
      <svg viewBox="0 0 1920 75" preserveAspectRatio="none" className="absolute inset-0 size-full" aria-hidden="true">
        <path d="M449 0 Q490 45 542 75 H1308 Q1360 40 1402 0 Z" fill="#350027" />
        <path d="M449 0 Q490 42 542 75 M604 0 Q665 47 746 75 M1388 0 Q1330 48 1247 75 M1402 0 Q1362 42 1308 75" fill="none" stroke="#571150" strokeWidth="2" />
      </svg>
      <nav aria-label="Dock" className="relative flex h-[70px] items-center rounded-[18px] border border-[#4a454a] bg-[#1b1019]/95 pr-1.5 pl-[3px]">
        <div className="flex gap-1">
          {dockLeft.map((d) => (
            <button key={d.name} type="button" aria-label={d.name} className="relative grid size-16 place-items-center">
              {d.art}
              {d.name !== "Visual Studio Code" && dot}
            </button>
          ))}
        </div>
        <span className="mx-[3px] h-12 w-px bg-[#4f464d]" />
        <div className="flex gap-1">
          {dockRight.map((d) => (
            <button
              key={d.name}
              type="button"
              aria-label={d.name}
              className={d.name === "Betaflight Configurator" ? "relative grid size-16 place-items-center rounded-xl bg-[#443a42]" : "relative grid size-16 place-items-center"}
            >
              {d.art}
              {d.running && dot}
            </button>
          ))}
          <button type="button" aria-label="Show applications" className="grid w-[60px] grid-cols-[repeat(3,6px)] content-center justify-center gap-1.5">
            {Array.from({ length: 9 }, (_, i) => (
              <i key={i} className="size-1.5 rounded-[2px] bg-[#f2f2f2]" />
            ))}
          </button>
        </div>
      </nav>
    </div>
  );
}

export default function App() {
  return (
    <div className="flex min-h-screen flex-col bg-[#393b3a] font-['Open_Sans',sans-serif]">
      <TopBar />
      <TitleBar />
      <AppHeader />
      <div className="flex h-[27px] items-center justify-between bg-[#242424] pr-[22px] pb-0.5 pl-2.5 text-xs text-[#a8a8a8]">
        <p>2024-08-24 @07:47:27 -- EEPROM <span className="text-[#d8a313]">saved</span></p>
        <button type="button" className="text-[#6b6b6b]">Show Log</button>
      </div>
      <div className="flex flex-1">
        <Sidebar />
        <ModesTab />
      </div>
      <StatusBar />
      <Dock />
    </div>
  );
}
